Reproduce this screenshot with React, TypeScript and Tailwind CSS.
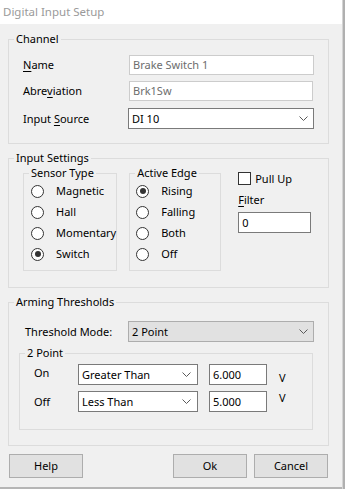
import React from "react";

const Chevron = () => (
  <svg width="9" height="5" viewBox="0 0 9 5" className="shrink-0">
    <polyline points="0.5,0.5 4.5,4.5 8.5,0.5" fill="none" stroke="#5a5a5a" strokeWidth="1" />
  </svg>
);

const Radio = ({ checked }: { checked?: boolean }) => (
  <span className="w-[13px] h-[13px] rounded-full border border-[#333333] bg-white flex items-center justify-center shrink-0">
    {checked && <span className="w-[6px] h-[6px] rounded-full bg-[#333333]" />}
  </span>
);

const RadioRow = ({ label, checked }: { label: string; checked?: boolean }) => (
  <div className="h-[20px] flex items-center gap-[12px]">
    <Radio checked={checked} />
    <span className="whitespace-nowrap">{label}</span>
  </div>
);

export default function App() {
  return (
    <div
      className="w-[347px] h-[489px] flex bg-white text-black text-[11px] leading-[14px] overflow-hidden"
      style={{ fontFamily: '"Noto Sans", "Open Sans", sans-serif' }}
    >
      <div className="w-[342px] flex flex-col">
        <div className="h-[24px] bg-white text-[#9a9a9a] pl-[3px] flex items-center text-[11.5px]">
          Digital Input Setup
        </div>
        <div className="flex-1 bg-[#f0f0f0] border-b-2 border-[#b5b5b5] pl-[8px] flex flex-col">
          {/* Channel */}
          <fieldset className="mt-[7px] w-[321px] border border-[#dcdcdc]">
            <legend className="ml-[5px] px-[2px] leading-[16px]">Channel</legend>
            <div className="pl-[14px] pt-[8px] pb-[14px] flex flex-col">
              <div className="flex items-center h-[20px]">
                <span className="w-[106px]">
                  <span className="underline underline-offset-2">N</span>ame
                </span>
                <div className="w-[185px] h-[20px] border border-[#cccccc] bg-white text-[#6d6d6d] pl-[3px] flex items-center">
                  Brake Switch 1
                </div>
              </div>
              <div className="flex items-center h-[20px] mt-[6px]">
                <span className="w-[106px]">
                  Abre<span className="underline underline-offset-2">v</span>iation
                </span>
                <div className="w-[184px] h-[20px] border border-[#cccccc] bg-white text-[#6d6d6d] pl-[3px] flex items-center">
                  Brk1Sw
                </div>
              </div>
              <div className="flex items-center h-[21px] mt-[7px]">
                <span className="w-[105px]">
                  Input <span className="underline underline-offset-2">S</span>ource
                </span>
                <div className="w-[186px] h-[21px] border border-[#7a7a7a] bg-white pl-[3px] pr-[5px] flex items-center justify-between">
                  <span>DI 10</span>
                  <Chevron />
                </div>
              </div>
            </div>
          </fieldset>

          {/* Input Settings */}
          <fieldset className="mt-[6px] w-[321px] border border-[#dcdcdc]">
            <legend className="ml-[5px] px-[2px] leading-[16px]">Input Settings</legend>
            <div className="pl-[14px] pb-[16px] flex">
              <fieldset className="w-[93px] border border-[#dcdcdc]">
                <legend className="ml-[5px] px-[2px] leading-[14px]">Sensor Type</legend>
                <div className="pl-[7px] pt-[1px] pb-[6px] flex flex-col gap-[1px]">
                  <RadioRow label="Magnetic" />
                  <RadioRow label="Hall" />
                  <RadioRow label="Momentary" />
                  <RadioRow label="Switch" checked />
                </div>
              </fieldset>
              <fieldset className="ml-[12px] w-[92px] border border-[#dcdcdc]">
                <legend className="ml-[5px] px-[2px] leading-[14px]">Active Edge</legend>
                <div className="pl-[6px] pt-[1px] pb-[6px] flex flex-col gap-[1px]">
                  <RadioRow label="Rising" checked />
                  <RadioRow label="Falling" />
                  <RadioRow label="Both" />
                  <RadioRow label="Off" />
                </div>
              </fieldset>
              <div className="ml-[17px] pt-[6px] flex flex-col">
                <div className="flex items-center gap-[4px] h-[13px]">
                  <span className="w-[13px] h-[13px] border border-[#333333] bg-white" />
                  <span>Pull Up</span>
                </div>
                <div className="mt-[8px] h-[14px] leading-[14px]">
                  <span className="underline underline-offset-2">F</span>ilter
                </div>
                <div className="mt-[5px] w-[73px] h-[21px] border border-[#7a7a7a] bg-white pl-[3px] flex items-center">
                  0
                </div>
              </div>
            </div>
          </fieldset>

          {/* Arming Thresholds */}
          <fieldset className="mt-[6px] w-[321px] border border-[#dcdcdc]">
            <legend className="ml-[5px] px-[2px] leading-[16px]">Arming Thresholds</legend>
            <div className="pl-[10px] pt-[11px] pb-[15px] flex flex-col">
              <div className="flex items-center h-[21px]">
                <span className="w-[109px] pl-[6px]">Threshold Mode:</span>
                <div className="w-[186px] h-[21px] border border-[#adadad] bg-[#e1e1e1] pl-[3px] pr-[5px] flex items-center justify-between">
                  <span>2 Point</span>
                  <Chevron />
                </div>
              </div>
              <fieldset className="mt-[4px] w-[294px] border border-[#dcdcdc]">
                <legend className="ml-[5px] px-[2px] leading-[14px]">2 Point</legend>
                <div className="pl-[14px] pt-[4px] pb-[17px] flex flex-col">
                  <div className="flex items-center h-[21px]">
                    <span className="w-[44px] -mt-[3px]">On</span>
                    <div className="w-[120px] h-[21px] border border-[#7a7a7a] bg-white pl-[3px] pr-[6px] flex items-center justify-between">
                      <span>Greater Than</span>
                      <Chevron />
                    </div>
                    <div className="ml-[11px] w-[58px] h-[21px] border border-[#7a7a7a] bg-white pl-[3px] flex items-center">
                      6.000
                    </div>
                    <span className="ml-[12px] mt-[6px]">V</span>
                  </div>
                  <div className="flex items-center h-[21px] mt-[6px]">
                    <span className="w-[44px]">Off</span>
                    <div className="w-[120px] h-[21px] border border-[#7a7a7a] bg-white pl-[3px] pr-[6px] flex items-center justify-between">
                      <span>Less Than</span>
                      <Chevron />
                    </div>
                    <div className="ml-[11px] w-[58px] h-[21px] border border-[#7a7a7a] bg-white pl-[3px] flex items-center">
                      5.000
                    </div>
                    <span className="ml-[12px] -mt-[8px]">V</span>
                  </div>
                </div>
              </fieldset>
            </div>
          </fieldset>

          {/* Buttons */}
          <div className="mt-[8px] flex items-center">
            <button className="ml-[1px] w-[74px] h-[24px] border border-[#adadad] bg-[#e1e1e1] flex items-center justify-center">
              Help
            </button>
            <button className="ml-[90px] w-[74px] h-[24px] border border-[#adadad] bg-[#e1e1e1] flex items-center justify-center">
              Ok
            </button>
            <button className="ml-[7px] w-[74px] h-[24px] border border-[#adadad] bg-[#e1e1e1] flex items-center justify-center">
              Cancel
            </button>
          </div>
        </div>
      </div>
      <div className="w-[1px] bg-[#d4d4d4]" />
      <div className="w-[2px] bg-[#b0b0b0]" />
      <div className="w-[2px] bg-white" />
    </div>
  );
}
